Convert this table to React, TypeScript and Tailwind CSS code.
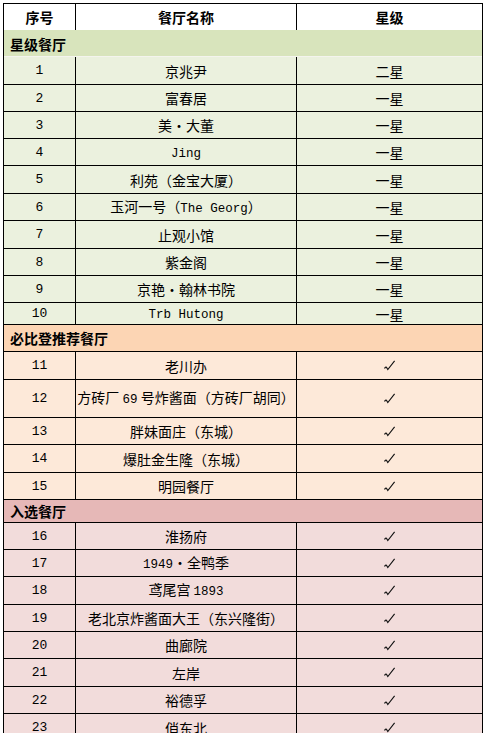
import React from "react";

type Row =
  | { kind: "data"; no: string; name: string; star?: string; h: number }
  | { kind: "section"; label: string; h: number; bg: string; light?: boolean };

const GREEN_ROW = "bg-[#ebf1de]";
const ORANGE_ROW = "bg-[#fde9d9]";
const PINK_ROW = "bg-[#f2dcdb]";

const rows: (Row & { rowBg?: string })[] = [
  { kind: "section", label: "星级餐厅", h: 27, bg: "bg-[#d8e4bc]", light: true },
  { kind: "data", no: "1", name: "京兆尹", star: "二星", h: 28, rowBg: GREEN_ROW },
  { kind: "data", no: "2", name: "富春居", star: "一星", h: 27, rowBg: GREEN_ROW },
  { kind: "data", no: "3", name: "美·大董", star: "一星", h: 27, rowBg: GREEN_ROW },
  { kind: "data", no: "4", name: "Jing", star: "一星", h: 27, rowBg: GREEN_ROW },
  { kind: "data", no: "5", name: "利苑（金宝大厦）", star: "一星", h: 28, rowBg: GREEN_ROW },
  { kind: "data", no: "6", name: "玉河一号（The Georg）", star: "一星", h: 27, rowBg: GREEN_ROW },
  { kind: "data", no: "7", name: "止观小馆", star: "一星", h: 28, rowBg: GREEN_ROW },
  { kind: "data", no: "8", name: "紫金阁", star: "一星", h: 27, rowBg: GREEN_ROW },
  { kind: "data", no: "9", name: "京艳·翰林书院", star: "一星", h: 27, rowBg: GREEN_ROW },
  { kind: "data", no: "10", name: "Trb Hutong", star: "一星", h: 22, rowBg: GREEN_ROW },
  { kind: "section", label: "必比登推荐餐厅", h: 27, bg: "bg-[#fcd5b4]" },
  { kind: "data", no: "11", name: "老川办", h: 28, rowBg: ORANGE_ROW },
  { kind: "data", no: "12", name: "方砖厂 69 号炸酱面（方砖厂胡同）", h: 38, rowBg: ORANGE_ROW },
  { kind: "data", no: "13", name: "胖妹面庄（东城）", h: 27, rowBg: ORANGE_ROW },
  { kind: "data", no: "14", name: "爆肚金生隆（东城）", h: 28, rowBg: ORANGE_ROW },
  { kind: "data", no: "15", name: "明园餐厅", h: 27, rowBg: ORANGE_ROW },
  { kind: "section", label: "入选餐厅", h: 23, bg: "bg-[#e6b8b7]" },
  { kind: "data", no: "16", name: "淮扬府", h: 27, rowBg: PINK_ROW },
  { kind: "data", no: "17", name: "1949·全鸭季", h: 27, rowBg: PINK_ROW },
  { kind: "data", no: "18", name: "鸢尾宫 1893", h: 28, rowBg: PINK_ROW },
  { kind: "data", no: "19", name: "老北京炸酱面大王（东兴隆街）", h: 27, rowBg: PINK_ROW },
  { kind: "data", no: "20", name: "曲廊院", h: 27, rowBg: PINK_ROW },
  { kind: "data", no: "21", name: "左岸", h: 28, rowBg: PINK_ROW },
  { kind: "data", no: "22", name: "裕德孚", h: 27, rowBg: PINK_ROW },
  { kind: "data", no: "23", name: "俏东北", h: 28, rowBg: PINK_ROW },
];

function MixedText({ text }: { text: string }) {
  const parts = text.split(/([\x21-\x7e](?:[\x20-\x7e]*[\x21-\x7e])?)/).filter((p) => p !== "");
  return (
    <span className="whitespace-pre leading-[16px]">
      {parts.map((p, i) =>
        /^[\x20-\x7e]+$/.test(p) && /[\x21-\x7e]/.test(p) ? (
          <span key={i} className="font-['Liberation_Mono',monospace] text-[12.5px]">
            {p}
          </span>
        ) : (
          <span key={i}>{p}</span>
        )
      )}
    </span>
  );
}

function Check() {
  return (
    <svg width="13" height="13" viewBox="0 0 13 13" className="block">
      <path d="M1.5 9.5 Q2.6 7.6 3.4 8.2 L4.8 10.6 L11.6 1.8" fill="none" stroke="#111" strokeWidth="1.1" strokeLinejoin="miter" />
    </svg>
  );
}

export default function App() {
  return (
    <div className="w-[486px] h-[733px] overflow-hidden bg-white pt-[3px] pl-[3px] font-['Noto_Sans_CJK_SC',sans-serif] text-[14px] text-black leading-none">
      <div className="w-[480px] border-x border-t border-black">
        {/* header */}
        <div className="flex h-[26px] bg-white font-bold">
          <div className="w-[72px] border-r border-black flex items-center justify-center">序号</div>
          <div className="w-[221px] border-r border-black flex items-center justify-center">餐厅名称</div>
          <div className="w-[185px] flex items-center justify-center">星级</div>
        </div>
        {rows.map((r, i) =>
          r.kind === "section" ? (
            <div
              key={i}
              style={{ height: r.h }}
              className={`flex items-center pl-[6px] font-bold ${r.bg} ${r.light ? "border-t border-t-[#d8e4bc] border-b border-b-[#f4f4ee]" : "border-b border-black"}`}
            >
              {r.label}
            </div>
          ) : (
            <div key={i} style={{ height: r.h }} className={`flex border-b border-black ${r.rowBg}`}>
              <div className="w-[72px] border-r border-black flex items-center justify-center font-['Liberation_Mono',monospace] text-[13px]">
                {r.no}
              </div>
              <div className="w-[221px] border-r border-black flex items-center justify-center">
                <MixedText text={r.name} />
              </div>
              <div className="w-[185px] flex items-center justify-center">
                {r.star ? r.star : <Check />}
              </div>
            </div>
          )
        )}
      </div>
    </div>
  );
}
